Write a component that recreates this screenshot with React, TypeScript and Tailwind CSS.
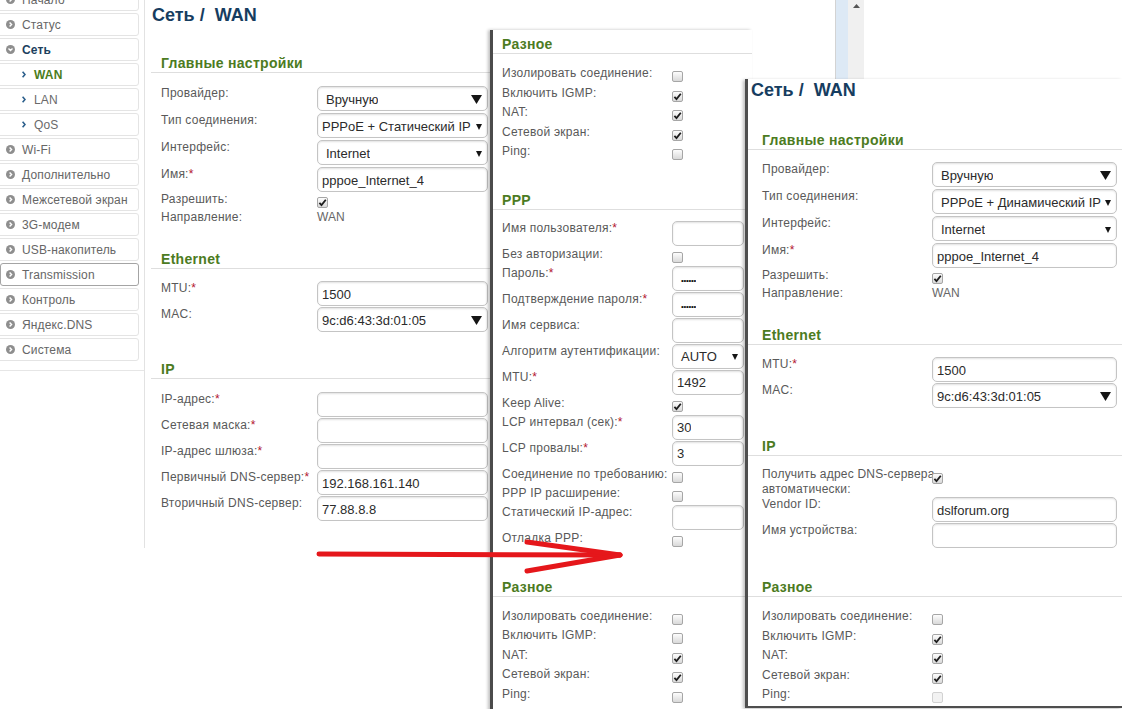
import React from "react";

type Item = { t: string; open?: boolean; sub?: boolean; active?: boolean; hover?: boolean };

const menu: Item[] = [
  { t: "Начало" },
  { t: "Статус" },
  { t: "Сеть", open: true },
  { t: "WAN", sub: true, active: true },
  { t: "LAN", sub: true },
  { t: "QoS", sub: true },
  { t: "Wi-Fi" },
  { t: "Дополнительно" },
  { t: "Межсетевой экран" },
  { t: "3G-модем" },
  { t: "USB-накопитель" },
  { t: "Transmission", hover: true },
  { t: "Контроль" },
  { t: "Яндекс.DNS" },
  { t: "Система" },
];

function Tri({ big }: { big?: boolean }) {
  if (big)
    return (
      <svg width="11" height="9" viewBox="0 0 11 9" className="shrink-0">
        <path d="M0 0H11L5.5 9Z" fill="#151515" />
      </svg>
    );
  return (
    <svg width="6" height="8" viewBox="0 0 6 8" className="shrink-0">
      <path d="M0 1H6L3 7Z" fill="#151515" />
    </svg>
  );
}

function Check({ on, faded }: { on?: boolean; faded?: boolean }) {
  return (
    <span
      className={`relative block w-[11px] h-[11px] rounded-[2px] border ${
        faded
          ? "border-[#d2d2d2] bg-[#f2f2f2]"
          : "border-[#a6a6a6] bg-gradient-to-b from-[#fdfdfd] to-[#d9d9d9]"
      }`}
    >
      {on && (
        <svg viewBox="0 0 11 11" className="absolute left-[-1px] top-[-1px] w-[11px] h-[11px]">
          <path d="M2.4 5.9 L4.5 8.1 L8.8 2.7" fill="none" stroke="#1d1d1d" strokeWidth="1.8" />
        </svg>
      )}
    </span>
  );
}

function Input({ w, children, arrow }: { w: string; children?: React.ReactNode; arrow?: "big" | "small" }) {
  return (
    <div
      className={`${w} h-[25px] shrink-0 flex items-center justify-between gap-[4px] rounded-[5px] border border-[#c4c4c4] bg-white pl-[4px] pr-[5px] pt-[2px] text-[13px] text-[#2b2b2b] shadow-[inset_0_1px_2px_rgba(0,0,0,0.12)]`}
    >
      <span className="whitespace-nowrap overflow-hidden">{children}</span>
      {arrow && <Tri big={arrow === "big"} />}
    </div>
  );
}

function Row({
  label,
  star,
  lw,
  h,
  children,
}: {
  label: React.ReactNode;
  star?: boolean;
  lw: string;
  h: string;
  children?: React.ReactNode;
}) {
  return (
    <div className={`flex items-start ${h}`}>
      <div className={`${lw} shrink-0 whitespace-nowrap text-[12px] leading-[14px] tracking-[0.25px] text-[#595959]`}>
        {label}
        {star && <span className="text-[#b3162f]">*</span>}
      </div>
      {children}
    </div>
  );
}

function CheckRow({ label, lw, on, faded, h = "h-[19.5px]" }: { label: string; lw: string; on?: boolean; faded?: boolean; h?: string }) {
  return (
    <Row label={label} lw={lw} h={h}>
      <div className="mt-[5px]">
        <Check on={on} faded={faded} />
      </div>
    </Row>
  );
}

function Heading({ children, pl, mt }: { children: React.ReactNode; pl: string; mt: string }) {
  return (
    <div className={`${mt} border-b border-[#dedede]`}>
      <div className={`${pl} text-[14px] leading-[18px] font-bold tracking-[0.3px] text-[#4c7b22]`}>{children}</div>
    </div>
  );
}

function Title({ pl }: { pl: string }) {
  return (
    <div className={`${pl} text-[18px] leading-[22px] font-bold text-[#163d60] whitespace-nowrap`}>
      Сеть /&nbsp; WAN
    </div>
  );
}

function Dots() {
  return <span className="text-[8px] leading-none tracking-[-0.3px] text-[#111]">••••••</span>;
}

function Sidebar() {
  return (
    <div className="w-[145px] h-full shrink-0 border-r border-[#e2e2e2] overflow-hidden">
      <div className="mt-[-12px]">
        {menu.map((m) => (
          <div
            key={m.t}
            className={`h-[23px] mb-[2px] flex items-center rounded-[3px] border ${
              m.hover ? "ml-0 w-[139px] border-[#a4a4a4]" : "ml-[-3px] w-[142px] border-[#e4e4e4]"
            }`}
          >
            {m.sub ? (
              <>
                <svg width="4" height="7" viewBox="0 0 4 7" className="ml-[24px]">
                  <path d="M0.6 0.8 L3 3.5 L0.6 6.2" fill="none" stroke="#2b5f8c" strokeWidth="1.6" />
                </svg>
                <span
                  className={`ml-[8px] text-[12px] tracking-[0.15px] ${
                    m.active ? "font-bold text-[#4a7d1c]" : "text-[#6a6a6a]"
                  }`}
                >
                  {m.t}
                </span>
              </>
            ) : (
              <>
                <svg width="9" height="9" viewBox="0 0 9 9" className={m.hover ? "ml-[5px]" : "ml-[8px]"}>
                  <circle cx="4.5" cy="4.5" r="4.5" fill="#8e8e8e" />
                  {m.open ? (
                    <path d="M2.5 3.5 L4.5 5.5 L6.5 3.5" fill="none" stroke="#fff" strokeWidth="1.4" />
                  ) : (
                    <path d="M3.6 2.4 L5.6 4.5 L3.6 6.6" fill="none" stroke="#fff" strokeWidth="1.4" />
                  )}
                </svg>
                <span
                  className={`ml-[7px] text-[12px] tracking-[0.15px] whitespace-nowrap ${
                    m.open ? "font-bold text-[#1d3f5e]" : "text-[#666666]"
                  }`}
                >
                  {m.t}
                </span>
              </>
            )}
          </div>
        ))}
        <div className="h-[8px] border-b border-[#e6e6e6]" />
      </div>
    </div>
  );
}

function PanelA() {
  const lw = "w-[156px]";
  const w = "w-[171px]";
  return (
    <div className="absolute left-0 top-0 w-[864px] h-[548px] flex bg-white">
      <Sidebar />
      <div className="flex-1 pl-[6px]">
        <div className="w-[600px]">
          <div className="mt-[4px]">
            <Title pl="pl-[1px]" />
          </div>
          <Heading pl="pl-[10px]" mt="mt-[28px]">Главные настройки</Heading>
          <div className="pl-[10px] mt-[13px]">
            <Row label="Провайдер:" lw={lw} h="h-[27px]">
              <Input w={w} arrow="big">
                <span className="pl-[4px]">Вручную</span>
              </Input>
            </Row>
            <Row label="Тип соединения:" lw={lw} h="h-[27px]">
              <Input w={w} arrow="small">PPPoE + Статический IP</Input>
            </Row>
            <Row label="Интерфейс:" lw={lw} h="h-[27px]">
              <Input w={w} arrow="small">
                <span className="pl-[4px]">Internet</span>
              </Input>
            </Row>
            <Row label="Имя:" star lw={lw} h="h-[25px]">
              <Input w={w}>pppoe_Internet_4</Input>
            </Row>
            <CheckRow label="Разрешить:" lw={lw} on h="h-[18px]" />
            <Row label="Направление:" lw={lw} h="h-[16px]">
              <span className="text-[12px] leading-[14px] text-[#666]">WAN</span>
            </Row>
          </div>
          <Heading pl="pl-[10px]" mt="mt-[24px]">Ethernet</Heading>
          <div className="pl-[10px] mt-[12px]">
            <Row label="MTU:" star lw={lw} h="h-[26px]">
              <Input w={w}>1500</Input>
            </Row>
            <Row label="MAC:" lw={lw} h="h-[26px]">
              <Input w={w} arrow="big">9c:d6:43:3d:01:05</Input>
            </Row>
          </div>
          <Heading pl="pl-[10px]" mt="mt-[27px]">IP</Heading>
          <div className="pl-[10px] mt-[13px]">
            <Row label="IP-адрес:" star lw={lw} h="h-[26px]">
              <Input w={w} />
            </Row>
            <Row label="Сетевая маска:" star lw={lw} h="h-[26px]">
              <Input w={w} />
            </Row>
            <Row label="IP-адрес шлюза:" star lw={lw} h="h-[26px]">
              <Input w={w} />
            </Row>
            <Row label="Первичный DNS-сервер:" star lw={lw} h="h-[26px]">
              <Input w={w}>192.168.161.140</Input>
            </Row>
            <Row label="Вторичный DNS-сервер:" lw={lw} h="h-[26px]">
              <Input w={w}>77.88.8.8</Input>
            </Row>
          </div>
        </div>
      </div>
      <div className="w-[29px] shrink-0 flex border-l border-[#d3d3d3]">
        <div className="w-[12px] bg-[#dde9f5]" />
        <div className="w-[16px] bg-[#f0f0f0] flex justify-center pt-[4px]">
          <svg width="7" height="4" viewBox="0 0 7 4">
            <path d="M0 4H7L3.5 0Z" fill="#555" />
          </svg>
        </div>
      </div>
    </div>
  );
}

function PanelB() {
  const lw = "w-[170px]";
  const w = "w-[72px]";
  return (
    <div className="absolute left-[490px] top-[30px] w-[262px] h-[700px] bg-white border-l-[3px] border-[#4b4b4b] shadow-[-2px_0_3px_rgba(0,0,0,0.25)] pt-[5px]">
      <Heading pl="pl-[9px]" mt="mt-0">Разное</Heading>
      <div className="pl-[9px] mt-[12px]">
        <CheckRow label="Изолировать соединение:" lw={lw} />
        <CheckRow label="Включить IGMP:" lw={lw} on />
        <CheckRow label="NAT:" lw={lw} on />
        <CheckRow label="Сетевой экран:" lw={lw} on />
        <CheckRow label="Ping:" lw={lw} />
      </div>
      <Heading pl="pl-[9px]" mt="mt-[27px]">PPP</Heading>
      <div className="pl-[9px] mt-[11px]">
        <Row label="Имя пользователя:" star lw={lw} h="h-[26px]">
          <Input w={w} />
        </Row>
        <CheckRow label="Без авторизации:" lw={lw} h="h-[19px]" />
        <Row label="Пароль:" star lw={lw} h="h-[26px]">
          <Input w={w}>
            <span className="pl-[4px]">
              <Dots />
            </span>
          </Input>
        </Row>
        <Row label="Подтверждение пароля:" star lw={lw} h="h-[26px]">
          <Input w={w}>
            <span className="pl-[4px]">
              <Dots />
            </span>
          </Input>
        </Row>
        <Row label="Имя сервиса:" lw={lw} h="h-[26px]">
          <Input w={w} />
        </Row>
        <Row label="Алгоритм аутентификации:" lw={lw} h="h-[26px]">
          <Input w={w} arrow="small">
            <span className="pl-[4px]">AUTO</span>
          </Input>
        </Row>
        <Row label="MTU:" star lw={lw} h="h-[26px]">
          <Input w={w}>1492</Input>
        </Row>
        <CheckRow label="Keep Alive:" lw={lw} on h="h-[19px]" />
        <Row label="LCP интервал (сек):" star lw={lw} h="h-[26px]">
          <Input w={w}>30</Input>
        </Row>
        <Row label="LCP провалы:" star lw={lw} h="h-[26px]">
          <Input w={w}>3</Input>
        </Row>
        <CheckRow label="Соединение по требованию:" lw={lw} h="h-[19px]" />
        <CheckRow label="PPP IP расширение:" lw={lw} h="h-[19px]" />
        <Row label="Статический IP-адрес:" lw={lw} h="h-[26px]">
          <Input w={w} />
        </Row>
        <CheckRow label="Отладка PPP:" lw={lw} h="h-[19px]" />
      </div>
      <Heading pl="pl-[9px]" mt="mt-[28px]">Разное</Heading>
      <div className="pl-[9px] mt-[12px]">
        <CheckRow label="Изолировать соединение:" lw={lw} />
        <CheckRow label="Включить IGMP:" lw={lw} />
        <CheckRow label="NAT:" lw={lw} on />
        <CheckRow label="Сетевой экран:" lw={lw} on />
        <CheckRow label="Ping:" lw={lw} />
      </div>
    </div>
  );
}

function PanelC() {
  const lw = "w-[170px]";
  const w = "w-[185px]";
  return (
    <div className="absolute left-[745px] top-[79px] w-[377px] h-[629px] bg-white border-l-[3px] border-b-2 border-[#4e4e4e] shadow-[-2px_1px_3px_rgba(0,0,0,0.25)]">
      <Title pl="pl-[3px]" />
      <Heading pl="pl-[14px]" mt="mt-[30px]">Главные настройки</Heading>
      <div className="pl-[14px] mt-[12px]">
        <Row label="Провайдер:" lw={lw} h="h-[27px]">
          <Input w={w} arrow="big">
            <span className="pl-[4px]">Вручную</span>
          </Input>
        </Row>
        <Row label="Тип соединения:" lw={lw} h="h-[27px]">
          <Input w={w} arrow="small">
            <span className="pl-[4px]">PPPoE + Динамический IP</span>
          </Input>
        </Row>
        <Row label="Интерфейс:" lw={lw} h="h-[27px]">
          <Input w={w} arrow="small">
            <span className="pl-[4px]">Internet</span>
          </Input>
        </Row>
        <Row label="Имя:" star lw={lw} h="h-[25px]">
          <Input w={w}>pppoe_Internet_4</Input>
        </Row>
        <CheckRow label="Разрешить:" lw={lw} on h="h-[18px]" />
        <Row label="Направление:" lw={lw} h="h-[16px]">
          <span className="text-[12px] leading-[14px] text-[#666]">WAN</span>
        </Row>
      </div>
      <Heading pl="pl-[14px]" mt="mt-[24px]">Ethernet</Heading>
      <div className="pl-[14px] mt-[12px]">
        <Row label="MTU:" star lw={lw} h="h-[26px]">
          <Input w={w}>1500</Input>
        </Row>
        <Row label="MAC:" lw={lw} h="h-[26px]">
          <Input w={w} arrow="big">9c:d6:43:3d:01:05</Input>
        </Row>
      </div>
      <Heading pl="pl-[14px]" mt="mt-[28px]">IP</Heading>
      <div className="pl-[14px] mt-[11px]">
        <div className="flex items-start h-[30px]">
          <div className={`${lw} shrink-0 whitespace-nowrap text-[12px] leading-[15px] tracking-[0.2px] text-[#595959]`}>
            Получить адрес DNS-сервера
            <br />
            автоматически:
          </div>
          <div className="mt-[6px]">
            <Check on />
          </div>
        </div>
        <Row label="Vendor ID:" lw={lw} h="h-[26px]">
          <Input w={w}>dslforum.org</Input>
        </Row>
        <Row label="Имя устройства:" lw={lw} h="h-[26px]">
          <Input w={w} />
        </Row>
      </div>
      <Heading pl="pl-[14px]" mt="mt-[29px]">Разное</Heading>
      <div className="pl-[14px] mt-[12px]">
        <CheckRow label="Изолировать соединение:" lw={lw} />
        <CheckRow label="Включить IGMP:" lw={lw} on />
        <CheckRow label="NAT:" lw={lw} on />
        <CheckRow label="Сетевой экран:" lw={lw} on />
        <CheckRow label="Ping:" lw={lw} faded />
      </div>
    </div>
  );
}

export default function App() {
  return (
    <div className="relative w-[1122px] h-[709px] overflow-hidden bg-white font-['Liberation_Sans',Arial,sans-serif]">
      <PanelA />
      <PanelB />
      <PanelC />
      {/* red arrow pasted over the screenshots */}
      <svg className="absolute left-0 top-0 w-[1122px] h-[709px] pointer-events-none" viewBox="0 0 1122 709">
        <g stroke="#e5171b" strokeWidth="5" strokeLinecap="round" fill="none">
          <path d="M319 554 L620 555" />
          <path d="M527 542 L620 555" />
          <path d="M527 571 L620 555" />
        </g>
      </svg>
    </div>
  );
}
